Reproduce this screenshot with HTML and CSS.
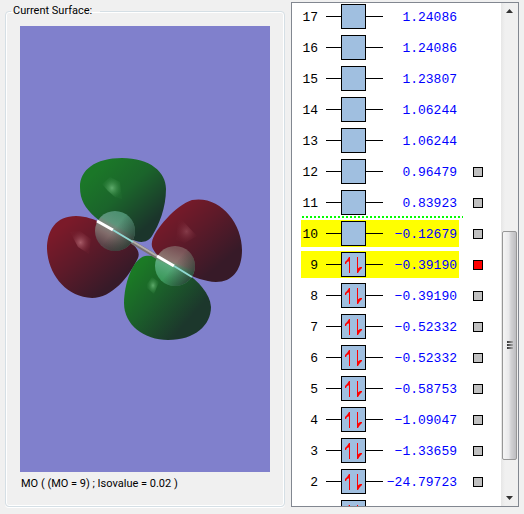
FILE: index.html
```html
<!DOCTYPE html>
<html lang="en">
<head>
    <meta charset="UTF-8">
    <title>MO Editor</title>
    <link rel="stylesheet" href="styles.css">
</head>
<body>
    <!-- Surface viewer -->
    <fieldset class="surface">
        <legend>Current Surface:</legend>
        <div class="viewer">
            <svg viewBox="20 26 250 446" role="img" aria-label="Molecular orbital surface">
                <defs>
                    <linearGradient id="greenTop" x1="0.25" y1="0.1" x2="0.85" y2="0.75">
                        <stop offset="0" stop-color="#1b7728"/>
                        <stop offset="0.45" stop-color="#1b642b"/>
                        <stop offset="1" stop-color="#1b352b"/>
                    </linearGradient>
                    <linearGradient id="greenBottom" x1="0.1" y1="0.2" x2="0.75" y2="0.75">
                        <stop offset="0" stop-color="#1b7a25"/>
                        <stop offset="0.45" stop-color="#1b5f2a"/>
                        <stop offset="1" stop-color="#1c372c"/>
                    </linearGradient>
                    <linearGradient id="redLobe" x1="0.2" y1="0.1" x2="0.8" y2="0.75">
                        <stop offset="0" stop-color="#7b1a29"/>
                        <stop offset="0.45" stop-color="#5e1a29"/>
                        <stop offset="1" stop-color="#371a28"/>
                    </linearGradient>
                    <linearGradient id="atomLeft" x1="0.75" y1="0.1" x2="0.3" y2="0.9">
                        <stop offset="0" stop-color="#4c9070"/>
                        <stop offset="0.35" stop-color="#5d957b"/>
                        <stop offset="0.52" stop-color="#84807a"/>
                        <stop offset="0.7" stop-color="#806a69"/>
                        <stop offset="1" stop-color="#5d454a"/>
                    </linearGradient>
                    <linearGradient id="atomRight" x1="0.65" y1="0.1" x2="0.35" y2="0.9">
                        <stop offset="0" stop-color="#7a5357"/>
                        <stop offset="0.4" stop-color="#8c7570"/>
                        <stop offset="0.55" stop-color="#59aa7c"/>
                        <stop offset="1" stop-color="#3c9a5c"/>
                    </linearGradient>
                    <linearGradient id="atomShade" x1="0.3" y1="0.25" x2="1" y2="0.8">
                        <stop offset="0.3" stop-color="#24382f" stop-opacity="0"/>
                        <stop offset="1" stop-color="#24382f" stop-opacity="0.95"/>
                    </linearGradient>
                    <radialGradient id="shineGreen">
                        <stop offset="0" stop-color="#5fab6c"/>
                        <stop offset="1" stop-color="#2a7d38" stop-opacity="0.2"/>
                    </radialGradient>
                    <radialGradient id="shineRed">
                        <stop offset="0" stop-color="#a75c68"/>
                        <stop offset="1" stop-color="#7a2635" stop-opacity="0.2"/>
                    </radialGradient>
                </defs>

                <!-- Lobes -->
                <path fill="url(#redLobe)" d="M76 216C56 216 47 230 47 249C48 274 66 297 92 298C112 298 129 277 138 258C141 250 134 244 120 235C105 226 97 217 76 216Z"/>
                <path fill="url(#greenTop)" d="M80 187C80 170 95 158 122 158C150 158 166 172 166 189C166 208 159 225 152 236C148 242 142 243 136 241C120 236 104 225 95 217C85 208 80 200 80 187Z"/>
                <path fill="url(#redLobe)" d="M152 242C154 230 176 205 192 200C219 195 242 222 242 250C242 268 234 282 216 282C195 281 170 266 158 256C153 250 151 247 152 242Z"/>
                <path fill="url(#greenBottom)" d="M145 256C132 259 124 285 124 303C124 325 144 340 168 340C195 340 211 325 211 307C210 293 198 281 185 272C172 263 158 254 145 256Z"/>

                <!-- Highlights -->
                <path fill="url(#shineGreen)" d="M102 184L110 177L120 182L122 199L115 197L108 191Z"/>
                <path fill="url(#shineRed)" d="M70 232L80 231L91 239L89 254L78 247Z"/>
                <path fill="url(#shineRed)" opacity="0.5" d="M178 221L182 220L197 236L185 243L176 240Z"/>
                <path fill="url(#shineGreen)" d="M147 284L152 277L159 282L154 294L147 288Z"/>

                <!-- Bond and atoms -->
                <circle cx="115" cy="231" r="20" fill="url(#atomLeft)"/>
                <circle cx="115" cy="231" r="20" fill="url(#atomShade)"/>
                <circle cx="175" cy="266" r="20" fill="url(#atomRight)"/>
                <circle cx="175" cy="266" r="20" fill="url(#atomShade)"/>
                <path stroke="#777170" stroke-width="4" d="M132 242L157 257"/>
                <path stroke="#b5aeab" stroke-width="2" d="M132 241L157 256"/>
                <path stroke="#ffffff" stroke-width="3" d="M97 221L113 230M157 256L174 266"/>
                <path stroke="#91d9d3" stroke-width="2" d="M113 230L133 242M174 266L192 277"/>
            </svg>
        </div>
        <p class="caption">MO ( (MO = 9) ; Isovalue = 0.02 )</p>
    </fieldset>

    <!-- Orbital energies -->
    <div class="orbitals">
        <ul class="levels" id="levels"></ul>
        <div class="scrollbar">
            <svg class="arrow" viewBox="0 0 7 4"><path d="M0 4L3.5 0L7 4Z"/></svg>
            <div class="track">
                <div class="thumb"><i></i><i></i><i></i></div>
            </div>
            <svg class="arrow" viewBox="0 0 7 4"><path d="M0 0L3.5 4L7 0Z"/></svg>
        </div>
    </div>

    <script src="script.js"></script>
</body>
</html>
```
FILE: styles.css
```css
* {
    box-sizing: border-box;
}

body {
    margin: 0;
    height: 100vh;
    padding: 2px 5px 7px;
    display: flex;
    gap: 6px;
    background-color: #f0f0f0;
    font-family: Roboto, sans-serif;
    font-size: 11px;
    color: #000;
}

/* Surface viewer */
.surface {
    flex: 1;
    min-width: 0;
    margin: 0;
    padding: 6px 14px 14px;
    border: 1px solid #d5dfe5;
    border-radius: 4px;
    box-shadow: inset 0 0 0 1px #fff, 0 1px 0 #fff;
    display: flex;
    flex-direction: column;
}

.surface legend {
    margin-left: -9px;
    padding: 0 8px 0 2px;
    line-height: 18px;
}

.viewer {
    flex: 1;
    min-height: 0;
    background-color: #8080cc;
}

.viewer svg {
    display: block;
    width: 100%;
    height: 100%;
}

.caption {
    margin: 4px 0 0;
    padding-left: 1px;
    line-height: 16px;
}

/* Orbital list */
.orbitals {
    flex: 0 0 228px;
    display: flex;
    border: 1px solid #828790;
    background-color: #fff;
    overflow: hidden;
}

.levels {
    flex: 1;
    margin: 0;
    padding: 0 0 0 9px;
    list-style: none;
    display: flex;
    flex-direction: column;
    gap: 4px;
    overflow: hidden;
    font-family: "Liberation Mono", monospace;
    font-size: 13px;
}

.levels li {
    flex: none;
    position: relative;
    display: flex;
    align-items: center;
    gap: 14px;
}

.level {
    width: 158px;
    height: 27px;
    display: flex;
    align-items: center;
}

.highlight .level {
    background-color: #ff0;
}

/* dotted line above the lowest unoccupied level */
.divider::before {
    content: "";
    position: absolute;
    top: -4px;
    left: 1px;
    width: 161px;
    height: 2px;
    background: repeating-linear-gradient(90deg, #0f0 0 2px, #fff 2px 4px);
}

.number {
    width: 17px;
    padding-top: 1px;
    text-align: right;
}

.line {
    width: 15px;
    height: 1px;
    background-color: #000;
}

.number + .line {
    margin-left: 8px;
}

.box + .line {
    width: 17px;
}

.box {
    width: 25px;
    height: 25px;
    border: 1px solid #000;
    background-color: #a0bfe0;
}

.box svg {
    display: block;
}

.value {
    flex: 1;
    display: flex;
    justify-content: flex-end;
    padding: 1px 2px 0 0;
    white-space: nowrap;
    color: #00f;
}

.levels input {
    appearance: none;
    width: 10px;
    height: 10px;
    margin: 0;
    border: 1px solid #000;
    background-color: #c0c0c0;
}

.levels input:checked {
    background-color: #f00;
}

/* Scrollbar */
.scrollbar {
    width: 17px;
    padding: 6px 1px;
    display: flex;
    flex-direction: column;
    align-items: center;
    background: linear-gradient(90deg, #e6e6e6, #f0f0f0 4px);
}

.arrow {
    width: 7px;
    height: 4px;
    fill: #333;
}

.track {
    flex: 1;
    width: 100%;
    padding: 4px 0;
    display: flex;
    flex-direction: column;
}

.track::before {
    content: "";
    flex: 214;
}

.track::after {
    content: "";
    flex: 32;
}

.thumb {
    flex: 228;
    display: flex;
    flex-direction: column;
    align-items: center;
    justify-content: center;
    gap: 1px;
    border: 1px solid #979797;
    border-radius: 2px;
    background: linear-gradient(90deg, #f5f5f5, #e9e9eb 45%, #d3d3d5 60%, #bdbdc0);
}

.thumb i {
    width: 6px;
    height: 2px;
    background: linear-gradient(90deg, #333, #aaa);
}
```
FILE: script.js
```js
// orbital number, energy
const levels = [
    [17, '1.24086'], [16, '1.24086'], [15, '1.23807'], [14, '1.06244'],
    [13, '1.06244'], [12, '0.96479'], [11, '0.83923'], [10, '−0.12679'],
    [9, '−0.39190'], [8, '−0.39190'], [7, '−0.52332'], [6, '−0.52332'],
    [5, '−0.58753'], [4, '−1.09047'], [3, '−1.33659'], [2, '−24.79723'],
    ['', '']
];

const electrons = '<svg width="23" height="23" viewBox="0 0 23 23">' +
    '<path fill="none" stroke="#f00" d="M7.5 4V20M15.5 4V20"/>' +
    '<path fill="#f00" d="M8 4H7L5 7L3 9V11H4L5 9L8 8ZM15 20H16L18 17L20 15V14H18L15 16Z"/>' +
    '</svg>';

document.getElementById('levels').innerHTML = levels.map(([n, energy]) => {
    const classes = [];
    if (n === 9 || n === 10) classes.push('highlight');
    if (n === 10) classes.push('divider');

    const check = n && n <= 12
        ? `<input type="checkbox" id="mo${n}" aria-label="MO ${n}"${n === 9 ? ' checked' : ''}>`
        : '';

    return `<li class="${classes.join(' ')}">
        <label class="level" for="mo${n}">
            <span class="number">${n}</span>
            <span class="line"></span>
            <span class="box">${n < 10 ? electrons : ''}</span>
            <span class="line"></span>
            <span class="value">${energy}</span>
        </label>
        ${check}
    </li>`;
}).join('');
```
